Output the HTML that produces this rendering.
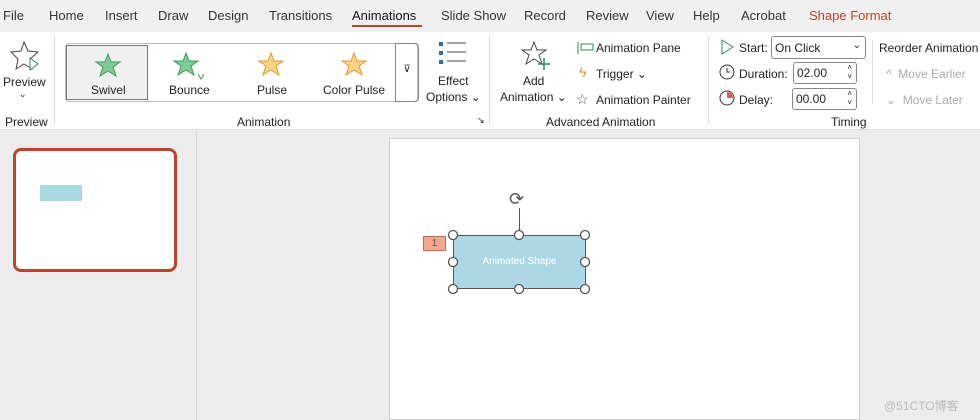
<!DOCTYPE html>
<html><head><style>
*{margin:0;padding:0;box-sizing:border-box}
body{width:980px;height:420px;overflow:hidden;background:#ececec;font-family:"Liberation Sans",sans-serif;font-size:12px;color:#222;position:relative}
.a{position:absolute;white-space:nowrap}
.tab{top:8px;font-size:13px;color:#333}
</style></head><body>
<div class="a" style="left:0;top:0;width:980px;height:32px;background:#f0f0f0"></div>
<span class="a tab" style="left:3px">File</span>
<span class="a tab" style="left:49px">Home</span>
<span class="a tab" style="left:105px">Insert</span>
<span class="a tab" style="left:158px">Draw</span>
<span class="a tab" style="left:208px">Design</span>
<span class="a tab" style="left:269px">Transitions</span>
<span class="a tab" style="left:352px;color:#111">Animations</span>
<div class="a" style="left:352px;top:25px;width:70px;height:2px;background:#b7472a"></div>
<span class="a tab" style="left:441px">Slide Show</span>
<span class="a tab" style="left:524px">Record</span>
<span class="a tab" style="left:586px">Review</span>
<span class="a tab" style="left:646px">View</span>
<span class="a tab" style="left:693px">Help</span>
<span class="a tab" style="left:741px">Acrobat</span>
<span class="a tab" style="left:809px;color:#b7472a">Shape Format</span>
<!-- ribbon -->
<div class="a" style="left:0;top:32px;width:980px;height:98px;background:#fff;border-bottom:1px solid #ddd"></div>
<svg class="a" style="left:8px;top:40px" width="34" height="32"><path d="M16 2l4 9 10 1-8 7 2 10-8-5-8 5 2-10-7-7 10-1z" fill="none" stroke="#444"/><path d="M22 18l8 6-8 6z" fill="#fff" stroke="#2e8b57"/></svg>
<span class="a" style="left:3px;top:75px">Preview</span>
<span class="a" style="left:19px;top:89px;font-size:9px">⌄</span>
<span class="a" style="left:5px;top:115px">Preview</span>
<div class="a" style="left:54px;top:36px;width:1px;height:88px;background:#ddd"></div>
<div class="a" style="left:65px;top:43px;width:353px;height:59px;border:1px solid #bbb;border-radius:4px"></div>
<div class="a" style="left:66px;top:45px;width:82px;height:55px;border:1px solid #777;background:#f0f0f0"></div>
<div class="a" style="left:395px;top:43px;width:24px;height:59px;border:1px solid #888;border-radius:0 4px 4px 0;text-align:center;padding-top:20px;font-size:10px">⊽</div>
<svg class="a" style="left:93px;top:50px" width="30" height="30"><path d="M15 4l3 8 9 0-7 5 3 9-8-5-8 5 3-9-7-5 9 0z" fill="#7ecb95" stroke="#3a9a5b"/></svg>
<svg class="a" style="left:172px;top:50px" width="36" height="32"><path d="M14 3l3 8 9 0-7 5 3 9-8-5-8 5 3-9-7-5 9 0z" fill="#7ecb95" stroke="#3a9a5b"/><path d="M26 24l3 5 3-5" fill="none" stroke="#3a9a5b"/></svg>
<svg class="a" style="left:256px;top:50px" width="30" height="30"><path d="M15 3l3 8 9 0-7 5 3 9-8-5-8 5 3-9-7-5 9 0z" fill="#fbd583" stroke="#e1952c"/></svg>
<svg class="a" style="left:338px;top:48px" width="32" height="32"><path d="M16 5l3 8 9 0-7 5 3 9-8-5-8 5 3-9-7-5 9 0z" fill="#fbd583" stroke="#e1952c"/></svg>
<span class="a" style="left:91px;top:83px">Swivel</span>
<span class="a" style="left:169px;top:83px">Bounce</span>
<span class="a" style="left:257px;top:83px">Pulse</span>
<span class="a" style="left:323px;top:83px">Color Pulse</span>
<svg class="a" style="left:438px;top:40px" width="30" height="28"><rect x="1" y="2" width="4" height="4" fill="#2f6fa8"/><rect x="1" y="11" width="4" height="4" fill="#2f6fa8"/><rect x="1" y="20" width="4" height="4" fill="#2f6fa8"/><path d="M9 3h19M9 12h19M9 21h19" stroke="#444"/></svg>
<span class="a" style="left:438px;top:74px">Effect</span>
<span class="a" style="left:426px;top:90px">Options ⌄</span>
<span class="a" style="left:237px;top:115px">Animation</span>
<span class="a" style="left:477px;top:115px;font-size:9px">↘</span>
<div class="a" style="left:489px;top:36px;width:1px;height:88px;background:#ddd"></div>
<svg class="a" style="left:520px;top:40px" width="32" height="32"><path d="M14 2l3 8 9 0-7 5 3 9-8-5-8 5 3-9-7-5 9 0z" fill="none" stroke="#444"/><path d="M24 18v12M18 24h12" stroke="#2e8b57" stroke-width="1.5"/></svg>
<span class="a" style="left:523px;top:74px">Add</span>
<span class="a" style="left:500px;top:90px">Animation ⌄</span>
<svg class="a" style="left:576px;top:41px" width="18" height="14"><path d="M2 1v12M5 3h12v6H5z" fill="none" stroke="#2e8b57"/></svg>
<span class="a" style="left:596px;top:41px">Animation Pane</span>
<span class="a" style="left:579px;top:64px;color:#e1952c;font-size:14px">ϟ</span>
<span class="a" style="left:596px;top:67px">Trigger ⌄</span>
<span class="a" style="left:576px;top:91px;font-size:14px;color:#555">☆</span>
<span class="a" style="left:596px;top:93px">Animation Painter</span>
<span class="a" style="left:546px;top:115px">Advanced Animation</span>
<div class="a" style="left:708px;top:36px;width:1px;height:88px;background:#ddd"></div>
<svg class="a" style="left:720px;top:39px" width="14" height="16"><path d="M2 1l11 7-11 7z" fill="none" stroke="#2e8b57"/></svg>
<span class="a" style="left:739px;top:41px">Start:</span>
<div class="a" style="left:771px;top:36px;width:95px;height:23px;border:1px solid #888;border-radius:3px;padding:4px 3px">On Click<span style="position:absolute;right:4px;top:3px;font-size:10px">⌄</span></div>
<svg class="a" style="left:719px;top:64px" width="16" height="16"><circle cx="8" cy="8" r="7" fill="none" stroke="#333"/><path d="M8 4v4h3" fill="none" stroke="#333"/></svg>
<span class="a" style="left:739px;top:67px">Duration:</span>
<div class="a" style="left:793px;top:62px;width:64px;height:22px;border:1px solid #888;border-radius:3px;padding:3px">02.00<span style="position:absolute;right:4px;top:0;font-size:8px;line-height:9px">˄<br>˅</span></div>
<svg class="a" style="left:719px;top:90px" width="16" height="16"><circle cx="8" cy="8" r="7" fill="none" stroke="#333"/><path d="M8 8V2A6 6 0 0 1 14 8z" fill="#e35a5a"/></svg>
<span class="a" style="left:739px;top:93px">Delay:</span>
<div class="a" style="left:792px;top:88px;width:65px;height:22px;border:1px solid #888;border-radius:3px;padding:3px">00.00<span style="position:absolute;right:4px;top:0;font-size:8px;line-height:9px">˄<br>˅</span></div>
<span class="a" style="left:831px;top:115px">Timing</span>
<div class="a" style="left:872px;top:40px;width:1px;height:64px;background:#ddd"></div>
<span class="a" style="left:879px;top:41px">Reorder Animation</span>
<span class="a" style="left:886px;top:67px;color:#aaa">^&nbsp; Move Earlier</span>
<span class="a" style="left:886px;top:93px;color:#aaa">⌄&nbsp; Move Later</span>
<!-- workspace -->
<div class="a" style="left:196px;top:131px;width:1px;height:289px;background:#d6d6d6"></div>
<div class="a" style="left:13px;top:148px;width:164px;height:124px;border:3px solid #b7472a;border-radius:8px;background:#fff"></div>
<div class="a" style="left:40px;top:185px;width:42px;height:16px;background:#a8d8e2"></div>
<div class="a" style="left:389px;top:138px;width:471px;height:282px;background:#fff;border:1px solid #d0d0d0"></div>
<div class="a" style="left:423px;top:236px;width:23px;height:15px;background:#f4a98c;border:1px solid #c96a4a;font-size:10px;text-align:center;line-height:13px;color:#555">1</div>
<div class="a" style="left:453px;top:235px;width:133px;height:54px;background:#acd7e4;border:1px solid #555;color:#fff;font-size:10px;text-align:center;line-height:52px">Animated Shape</div>
<div class="a" style="left:519px;top:208px;width:1px;height:27px;background:#555"></div>
<span class="a" style="left:509px;top:189px;font-size:18px;color:#555">⟳</span>
<svg class="a" style="left:446px;top:228px" width="147" height="68"><g fill="#fff" stroke="#555" stroke-width="1.3"><circle cx="7" cy="7" r="4.5"/><circle cx="73" cy="7" r="4.5"/><circle cx="139" cy="7" r="4.5"/><circle cx="7" cy="34" r="4.5"/><circle cx="139" cy="34" r="4.5"/><circle cx="7" cy="61" r="4.5"/><circle cx="73" cy="61" r="4.5"/><circle cx="139" cy="61" r="4.5"/></g></svg>
<span class="a" style="left:884px;top:397px;color:#bbb;font-size:12px">@51CTO博客</span>
</body></html>
